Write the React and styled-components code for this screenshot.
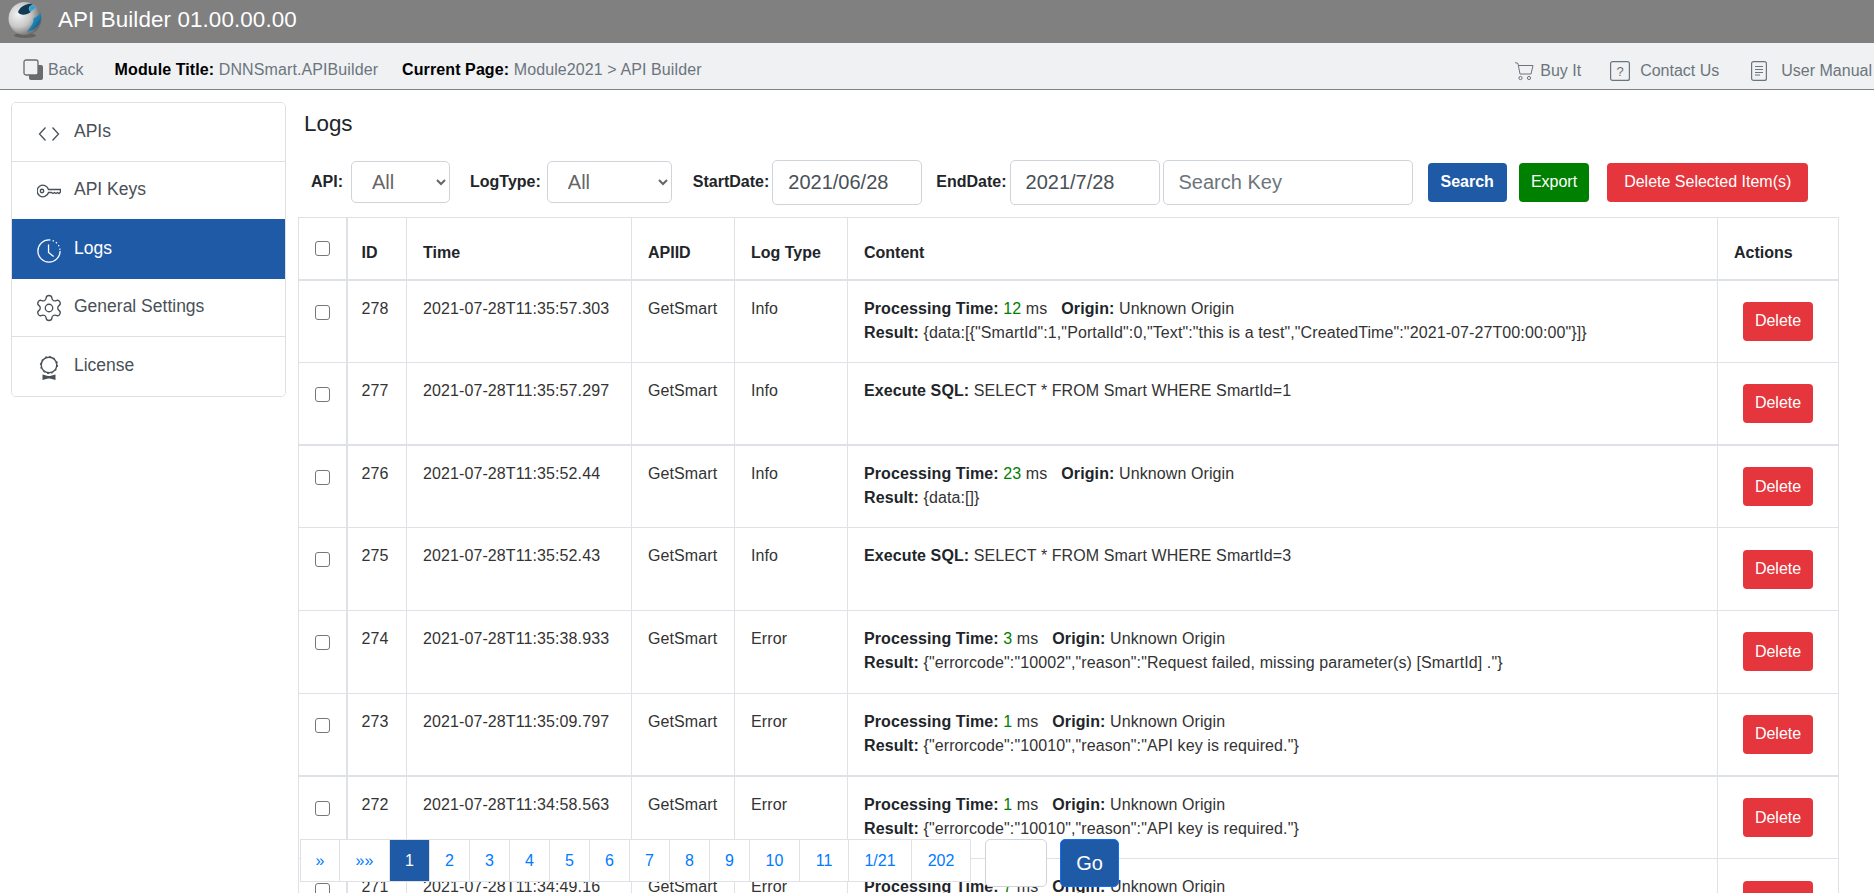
import React from "react";
import styled, { createGlobalStyle } from "styled-components";
import { Settings } from "lucide-react";

const GlobalStyle = createGlobalStyle`
  html, body {
    margin: 0;
    padding: 0;
    background: #fff;
    overflow: hidden;
    font-family: "Liberation Sans", Arial, sans-serif;
    font-size: 16px;
    color: #212529;
  }
  * { box-sizing: border-box; }
`;

const Page = styled.div`
  position: relative;
  height: 100vh;
  overflow: hidden;
`;

const TopBar = styled.div`
  height: 43px;
  background: #808080;
  display: flex;
  align-items: center;
  padding: 0 0 3px 8px;
  color: #fff;
  font-size: 22.4px;
  letter-spacing: 0.1px;
  gap: 16px;
`;

const SubNav = styled.div`
  height: 47px;
  background: #eff1f3;
  border-bottom: 1px solid #7d8487;
  display: flex;
  align-items: center;
  justify-content: space-between;
  padding: 7px 2px 0 23px;
  color: #6c757d;
`;

const NavGroup = styled.div`
  display: flex;
  align-items: center;
`;

const RightGroup = styled(NavGroup)`
  padding-top: 2px;
`;

const NavItem = styled.span`
  display: flex;
  align-items: center;
  gap: ${p => p.$gap || 6}px;
  margin-left: ${p => p.$left || 0}px;
`;

const Info = styled.span`
  margin-left: ${p => p.$left}px;
  letter-spacing: 0.1px;
  b {
    color: #000;
  }
`;

const Main = styled.div`
  display: flex;
  align-items: flex-start;
  padding: 12px 36px 0 11px;
  gap: 12px;
`;

const Side = styled.div`
  width: 275px;
  flex: none;
  border: 1px solid #dfdfdf;
  border-radius: 5px;
  overflow: hidden;
`;

const SideItem = styled.div`
  height: ${p => p.$h}px;
  display: flex;
  align-items: center;
  gap: 13px;
  padding: 0 0 2px 25px;
  font-size: 17.5px;
  color: ${p => (p.$active ? "#fff" : "#495057")};
  background: ${p => (p.$active ? "#1f5aa6" : "#fff")};
  border-bottom: ${p => (p.$line ? "1px solid #dfdfdf" : "none")};
  svg {
    flex: none;
    margin-top: 5px;
  }
`;

const GearIcon = styled(Settings)`
  && {
    margin: 2px -3px 0;
  }
`;

const Content = styled.div`
  flex: 1;
  min-width: 0;
`;

const Title = styled.h1`
  margin: 0;
  height: 45px;
  padding: 9px 0 0 6px;
  font-size: 22.4px;
  line-height: 26px;
  font-weight: 400;
  color: #212529;
`;

const Filters = styled.div`
  height: 70px;
  display: flex;
  align-items: center;
  padding-left: 13px;
`;

const Label = styled.label`
  font-weight: 700;
  margin-left: ${p => p.$left || 0}px;
  margin-right: ${p => p.$right}px;
`;

const Select = styled.select`
  height: 42px;
  width: ${p => p.$w}px;
  padding-left: 16px;
  font-family: inherit;
  font-size: 20px;
  color: #666;
  background: #fff;
  border: 1px solid #ced4da;
  border-radius: 5px;
`;

const TextInput = styled.input`
  height: 45px;
  width: ${p => p.$w}px;
  margin-left: ${p => p.$left || 0}px;
  padding: 0 15px;
  font-family: inherit;
  font-size: 20px;
  color: #495057;
  background: #fff;
  border: 1px solid #ced4da;
  border-radius: 5px;
  &::placeholder {
    color: #6c757d;
  }
`;

const Button = styled.button`
  height: 39px;
  padding: 0 ${p => p.$pad || 12}px;
  margin-left: ${p => p.$left || 0}px;
  border: none;
  border-radius: 4px;
  font-family: inherit;
  font-size: 16px;
  font-weight: ${p => (p.$bold ? 700 : 400)};
  color: #fff;
  background: ${p => p.$bg};
`;

const Table = styled.table`
  width: 1540px;
  table-layout: fixed;
  border-collapse: collapse;
`;

const HeadCell = styled.th`
  height: 62px;
  padding: 9px 16px 0;
  text-align: left;
  font-weight: 700;
  border: 1px solid #dee2e6;
  border-bottom: 2px solid #dee2e6;
  &:first-child {
    border-right: 2px solid #dee2e6;
  }
  &:nth-child(2) {
    padding-left: 14px;
  }
`;

const Row = styled.tr`
  height: 82.75px;
  td {
    border-top: ${p => (p.$thick ? 2 : 1)}px solid #dee2e6;
  }
`;

const Cell = styled.td`
  padding: 16px 16px 0;
  line-height: 24px;
  letter-spacing: 0.1px;
  vertical-align: top;
  border: 1px solid #dee2e6;
  color: #333;
  &:first-child {
    border-right: 2px solid #dee2e6;
  }
  &:nth-child(2) {
    padding-left: 14px;
  }
`;

const ActionCell = styled(Cell)`
  padding: 0;
  text-align: center;
  vertical-align: middle;
  letter-spacing: 0;
`;

const Check = styled.input`
  appearance: none;
  display: block;
  width: 15px;
  height: 15px;
  margin: ${p => (p.$head ? "0 0 9px 0" : "8px 0 0 0")};
  border: 1px solid #767676;
  border-radius: 3px;
  background: #fff;
`;

const Strong = styled.b`
  color: #212529;
`;

const Green = styled.span`
  color: #008000;
`;

const Origin = styled.span`
  margin-left: 14px;
`;

const Pager = styled.div`
  position: absolute;
  left: 300px;
  top: 839px;
  display: flex;
  align-items: flex-start;
`;

const PageList = styled.div`
  display: flex;
  height: 43px;
  background: #fff;
  border: 1px solid #dee2e6;
`;

const PageLink = styled.a`
  display: flex;
  align-items: center;
  justify-content: center;
  min-width: ${p => p.$w}px;
  border-right: ${p => (p.$last ? "none" : "1px solid #dee2e6")};
  color: ${p => (p.$active ? "#fff" : "#007bff")};
  background: ${p => (p.$active ? "#1f5aa6" : "#fff")};
`;

const GoInput = styled.input`
  width: 62px;
  height: 48px;
  margin-left: 14px;
  background: #fff;
  border: 1px solid #ced4da;
  border-radius: 5px;
`;

const GoButton = styled.button`
  width: 59px;
  height: 48px;
  margin-left: 13px;
  font-family: inherit;
  font-size: 20px;
  color: #fff;
  background: #1f5aa6;
  border: 1px solid #0d6efd;
  border-radius: 5px;
`;

const Logo = () => (
  <svg width="34" height="38" viewBox="0 0 34 38" style={{ flex: "none" }}>
    <defs>
      <radialGradient id="silver" cx="30%" cy="38%" r="75%">
        <stop offset="0" stopColor="#f4f4f4" />
        <stop offset="0.5" stopColor="#c8c8c8" />
        <stop offset="1" stopColor="#5c5c5c" />
      </radialGradient>
      <linearGradient id="swoosh" x1="0" y1="0" x2="1" y2="1">
        <stop offset="0" stopColor="#2aa5d6" />
        <stop offset="0.55" stopColor="#1b7fb0" />
        <stop offset="1" stopColor="#0c3048" />
      </linearGradient>
    </defs>
    <ellipse cx="17" cy="34.5" rx="11" ry="2.5" fill="#636363" />
    <circle cx="17" cy="17.5" r="16.5" fill="url(#silver)" />
    <path d="M10 11 C12 6 18 2 25 3 C21 5 19 8 23 11 C19 14 12 15 10 11 Z" fill="#103a55" />
    <path d="M24 4 C21 6 20 8 23 10.5 C25 9 27 7 28 6 Z" fill="#2aa5d6" />
    <path d="M32.5 12 C35 21 29 29 19 31 C22 26 26 23 25.5 17.5 C28 16 31 14 32.5 12 Z" fill="url(#swoosh)" />
  </svg>
);

const BackIcon = () => (
  <svg width="20" height="21" viewBox="0 0 20 21">
    <rect x="6" y="6" width="14" height="15" rx="2" fill="#6b6b6b" />
    <rect x="1" y="1" width="14" height="15" rx="2" fill="#eff1f3" stroke="#6b6b6b" strokeWidth="1.3" />
  </svg>
);

const CartIcon = () => (
  <svg width="20" height="20" viewBox="0 0 20 20" fill="none" stroke="#6c757d" strokeWidth="1">
    <path d="M1 1.5 L4 2.5 L6 13 H17 L19 4.5 H4.5" />
    <circle cx="6.5" cy="17" r="1.6" />
    <circle cx="15" cy="17" r="1.6" />
  </svg>
);

const HelpIcon = () => (
  <svg width="20" height="20" viewBox="0 0 20 20">
    <rect x="0.6" y="0.6" width="18.8" height="18.8" rx="2" fill="none" stroke="#6c757d" strokeWidth="1.2" />
    <text x="10" y="15" textAnchor="middle" fontSize="13" fontFamily="Liberation Sans" fill="#6c757d">?</text>
  </svg>
);

const DocIcon = () => (
  <svg width="16" height="20" viewBox="0 0 16 20" fill="none" stroke="#6c757d" strokeWidth="1.2">
    <rect x="0.6" y="0.6" width="14.8" height="18.8" rx="2" />
    <path d="M4 5.5 H12 M4 8.5 H12 M4 11.5 H12 M4 14 H9" />
  </svg>
);

const CodeIcon = () => (
  <svg width="24" height="24" viewBox="0 0 24 24" fill="none" stroke="#495057" strokeWidth="1.3">
    <path d="M8.5 5.5 L2.5 12 L8.5 18.5 M15.5 5.5 L21.5 12 L15.5 18.5" />
  </svg>
);

const KeyIcon = () => (
  <svg width="24" height="24" viewBox="0 0 24 24" fill="none" stroke="#495057" strokeWidth="1.4">
    <path d="M11.5 9.5 H23.5 V12 L22 13.5 L20.5 12.5 L19 13.5 L17.5 12.5 L16 13.5 L14.5 12.5 H11.5 A5.8 5.8 0 1 1 11.5 9.5 Z" />
    <circle cx="5" cy="11" r="1.7" />
  </svg>
);

const ClockIcon = () => (
  <svg width="24" height="26" viewBox="0 0 26 26" fill="none" stroke="#fff" strokeWidth="1.4">
    <path d="M13 1 A12 12 0 1 0 25 13" />
    <path d="M13 1 A12 12 0 0 1 25 13" strokeDasharray="1.5 2.5" />
    <path d="M12.5 6 V14.5 L18 19" />
  </svg>
);

const LicenseIcon = () => (
  <svg width="24" height="26" viewBox="0 0 24 26" fill="none" stroke="#495057">
    <circle cx="12" cy="10" r="7.8" strokeWidth="1.4" />
    <circle cx="12" cy="10" r="8.6" strokeWidth="1" strokeDasharray="2 2.5" />
    <path d="M5.5 19.5 L11 21 H13 L18.5 19.5 V25 L13 23.5 H11 L5.5 25 Z" fill="#495057" stroke="none" />
  </svg>
);

const processing = (ms, result) => (
  <>
    <Strong>Processing Time:</Strong> <Green>{ms}</Green> ms
    <Origin>
      <Strong>Origin:</Strong> Unknown Origin
    </Origin>
    <br />
    <Strong>Result:</Strong> {result}
  </>
);

const sql = id => (
  <>
    <Strong>Execute SQL:</Strong> SELECT * FROM Smart WHERE SmartId={id}
  </>
);

const keyRequired = '{"errorcode":"10010","reason":"API key is required."}';

const logs = [
  { id: 278, time: "2021-07-28T11:35:57.303", type: "Info", content: processing(12, '{data:[{"SmartId":1,"PortalId":0,"Text":"this is a test","CreatedTime":"2021-07-27T00:00:00"}]}') },
  { id: 277, time: "2021-07-28T11:35:57.297", type: "Info", content: sql(1) },
  { id: 276, time: "2021-07-28T11:35:52.44", type: "Info", content: processing(23, "{data:[]}"), thick: true },
  { id: 275, time: "2021-07-28T11:35:52.43", type: "Info", content: sql(3) },
  { id: 274, time: "2021-07-28T11:35:38.933", type: "Error", content: processing(3, '{"errorcode":"10002","reason":"Request failed, missing parameter(s) [SmartId] ."}') },
  { id: 273, time: "2021-07-28T11:35:09.797", type: "Error", content: processing(1, keyRequired) },
  { id: 272, time: "2021-07-28T11:34:58.563", type: "Error", content: processing(1, keyRequired), thick: true },
  { id: 271, time: "2021-07-28T11:34:49.16", type: "Error", content: processing(7, keyRequired) }
];

const pages = [
  ["»", 39], ["»»", 50], ["1", 40], ["2", 40], ["3", 40], ["4", 40], ["5", 40], ["6", 40],
  ["7", 40], ["8", 40], ["9", 40], ["10", 50], ["11", 49], ["1/21", 63], ["202", 58]
];

function App() {
  return (
    <Page>
      <GlobalStyle />
      <TopBar>
        <Logo />
        API Builder 01.00.00.00
      </TopBar>
      <SubNav>
        <NavGroup>
          <NavItem $gap={5}>
            <BackIcon />
            Back
          </NavItem>
          <Info $left={31}><b>Module Title:</b> DNNSmart.APIBuilder</Info>
          <Info $left={24}><b>Current Page:</b> Module2021 &gt; API Builder</Info>
        </NavGroup>
        <RightGroup>
          <NavItem $gap={6}>
            <CartIcon />
            Buy It
          </NavItem>
          <NavItem $left={29} $gap={10}>
            <HelpIcon />
            Contact Us
          </NavItem>
          <NavItem $left={32} $gap={14}>
            <DocIcon />
            User Manual
          </NavItem>
        </RightGroup>
      </SubNav>
      <Main>
        <Side>
          <SideItem $h={59} $line><CodeIcon />APIs</SideItem>
          <SideItem $h={57}><KeyIcon />API Keys</SideItem>
          <SideItem $h={60} $active><ClockIcon />Logs</SideItem>
          <SideItem $h={58} $line><GearIcon size={30} strokeWidth={1.05} />General Settings</SideItem>
          <SideItem $h={59}><LicenseIcon />License</SideItem>
        </Side>
        <Content>
          <Title>Logs</Title>
          <Filters>
            <Label $right={8}>API:</Label>
            <Select $w={99}><option>All</option></Select>
            <Label $left={20} $right={6}>LogType:</Label>
            <Select $w={125}><option>All</option></Select>
            <Label $left={21} $right={3}>StartDate:</Label>
            <TextInput $w={150} defaultValue="2021/06/28" />
            <Label $left={14} $right={3}>EndDate:</Label>
            <TextInput $w={150} defaultValue="2021/7/28" />
            <TextInput $w={250} $left={3} placeholder="Search Key" />
            <Button $bg="#1f5aa6" $bold $left={15} $pad={13}>Search</Button>
            <Button $bg="#008000" $left={12}>Export</Button>
            <Button $bg="#e4363c" $left={18} $pad={17}>Delete Selected Item(s)</Button>
          </Filters>
          <Table>
            <colgroup>
              <col style={{ width: 48 }} />
              <col style={{ width: 60 }} />
              <col style={{ width: 225 }} />
              <col style={{ width: 103 }} />
              <col style={{ width: 113 }} />
              <col style={{ width: 870 }} />
              <col style={{ width: 121 }} />
            </colgroup>
            <thead>
              <tr>
                <HeadCell><Check type="checkbox" $head /></HeadCell>
                <HeadCell>ID</HeadCell>
                <HeadCell>Time</HeadCell>
                <HeadCell>APIID</HeadCell>
                <HeadCell>Log Type</HeadCell>
                <HeadCell>Content</HeadCell>
                <HeadCell>Actions</HeadCell>
              </tr>
            </thead>
            <tbody>
              {logs.map(l => (
                <Row key={l.id} $thick={l.thick}>
                  <Cell><Check type="checkbox" /></Cell>
                  <Cell>{l.id}</Cell>
                  <Cell>{l.time}</Cell>
                  <Cell>GetSmart</Cell>
                  <Cell>{l.type}</Cell>
                  <Cell>{l.content}</Cell>
                  <ActionCell><Button $bg="#e4363c">Delete</Button></ActionCell>
                </Row>
              ))}
            </tbody>
          </Table>
        </Content>
      </Main>
      <Pager>
        <PageList>
          {pages.map(([label, w], i) => (
            <PageLink key={label} $w={w} $active={label === "1"} $last={i === pages.length - 1}>
              {label}
            </PageLink>
          ))}
        </PageList>
        <GoInput />
        <GoButton>Go</GoButton>
      </Pager>
    </Page>
  );
}

export default App;
